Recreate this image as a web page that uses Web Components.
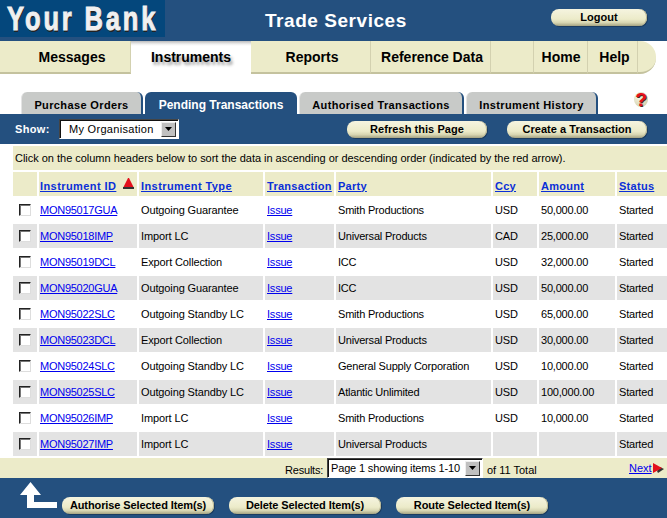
<!DOCTYPE html>
<html>
<head>
<meta charset="utf-8">
<title>Trade Services</title>
<style>
  html, body { margin: 0; padding: 0; background: #fff; }
  body { width: 667px; height: 518px; overflow: hidden; font-family: "Liberation Sans", Arial, sans-serif; font-size: 11px; color: #000; }
</style>
</head>
<body>
<bank-header></bank-header>
<main-nav></main-nav>
<sub-tabs></sub-tabs>
<tool-bar></tool-bar>
<data-table></data-table>
<results-bar></results-bar>
<action-bar></action-bar>

<script>
// Rounded beige button used all over the page
class PillButton extends HTMLElement {
    constructor() {
        super();
        this.attachShadow({ mode: 'open' });
        this.shadowRoot.innerHTML = `
            <style>
                :host {
                    display: flex;
                    align-items: center;
                    justify-content: center;
                    box-sizing: border-box;
                    height: 17px;
                    border-radius: 8px;
                    background: linear-gradient(#f5f4e0, #ecebc9 60%, #d8d6b2 80%, #a5a382);
                    box-shadow: inset -1px 0 0 #b9b793, 1px 1px 0 #1c3c60;
                    font: bold 11px "Liberation Sans", Arial, sans-serif;
                    letter-spacing: .05px;
                    color: #000;
                    white-space: nowrap;
                    padding-bottom: 1px;
                }
            </style>
            <slot></slot>
        `;
    }
}
customElements.define('pill-button', PillButton);

// Logo and page title
class BankHeader extends HTMLElement {
    constructor() {
        super();
        this.attachShadow({ mode: 'open' });
        this.shadowRoot.innerHTML = `
            <style>
                :host { display: flex; height: 41px; background: #24507f; align-items: flex-start; }
                .logo {
                    width: 165px;
                    height: 37px;
                    flex: none;
                    background: #04477c;
                    padding-left: 7px;
                    box-sizing: border-box;
                }
                .logo span {
                    display: block;
                    width: max-content;
                    color: #f0f0f0;
                    font: bold 34px/36px "Liberation Sans", Arial, sans-serif;
                    letter-spacing: 3.800px;
                    -webkit-text-stroke: 1px #f0f0f0;
                    text-shadow: 1px 2px 0 #222;
                    white-space: nowrap;
                    /* the logo face is much narrower than any installed font */
                    transform: scaleX(.75);
                    transform-origin: left top;
                }
                .title {
                    margin-left: 100px;
                    margin-top: 10px;
                    color: #fff;
                    font: bold 19px/22px "Liberation Sans", Arial, sans-serif;
                    letter-spacing: .55px;
                    width: 286px;
                }
                pill-button { width: 96px; margin-top: 9px; }
            </style>
            <div class="logo"><span>Your Bank</span></div>
            <div class="title">Trade Services</div>
            <pill-button>Logout</pill-button>
        `;
    }
}
customElements.define('bank-header', BankHeader);

// Main navigation strip
class MainNav extends HTMLElement {
    constructor() {
        super();
        this.attachShadow({ mode: 'open' });
        // label, width, left padding that nudges the label, class
        const items = [['Messages', 131, 14], ['Instruments', 120, 0, 'on'], ['Reports', 120, 3], ['Reference Data', 120, 3], ['', 43, 0], ['Home', 54, 1], ['Help', 50, 4]];
        this.shadowRoot.innerHTML = `
            <style>
                :host { display: flex; width: 656px; height: 33px; font: bold 14px "Liberation Sans", Arial, sans-serif; }
                div {
                    box-sizing: border-box;
                    display: flex;
                    align-items: center;
                    justify-content: center;
                    background: #ecebc9;
                    border-bottom: 2px solid #c4c29e;
                    border-right: 1px solid #d3d1b0;
                }
                .on {
                    background: linear-gradient(#bbb, #eee 3px, #fff 5px);
                    border: 0;
                    text-shadow: 2px 3px 3px #999;
                    padding-bottom: 1px;
                }
                .end { flex: 1; border-right: 0; border-radius: 0 16px 16px 0; }
            </style>
            ${items.map(i => `<div class="${i[3] || ''}" style="width:${i[1]}px;padding-left:${i[2]}px">${i[0]}</div>`).join('')}
            <div class="end"></div>
        `;
    }
}
customElements.define('main-nav', MainNav);

// Second level tabs
class SubTabs extends HTMLElement {
    constructor() {
        super();
        this.attachShadow({ mode: 'open' });
        const tabs = [['Purchase Orders', 122], ['Pending Transactions', 152, 'on'], ['Authorised Transactions', 165], ['Instrument History', 132]];
        this.shadowRoot.innerHTML = `
            <style>
                :host { display: flex; gap: 2px; height: 22px; padding: 18px 0 0 21px; position: relative; font: bold 11px "Liberation Sans", Arial, sans-serif; letter-spacing: .37px; }
                div {
                    box-sizing: border-box;
                    display: flex;
                    align-items: center;
                    justify-content: center;
                    background: #c8cac8;
                    border-radius: 6px 6px 0 0;
                    border-left: 1px solid #e4e4e4;
                    border-right: 2px solid #24507f;
                    padding-top: 4px;
                }
                .on { background: #24507f; color: #fff; border: 0; font-size: 12px; letter-spacing: 0; padding-top: 3px; }
                /* help icon sits in the empty corner of the strip */
                span {
                    position: absolute;
                    left: 634px;
                    top: 18px;
                    width: 14px;
                    height: 15px;
                    border-radius: 50%;
                    background: radial-gradient(circle at 35% 35%, #f6f5e2, #c9c7a2);
                    color: #e8101a;
                    font: bold 19px/15px "Liberation Sans", Arial, sans-serif;
                    letter-spacing: 0;
                    text-align: center;
                    text-shadow: 1px 1px 0 #4a2a20;
                }
            </style>
            ${tabs.map(t => `<div class="${t[2] || ''}" style="width:${t[1]}px">${t[0]}</div>`).join('')}
            <span>?</span>
        `;
    }
}
customElements.define('sub-tabs', SubTabs);

// Old style select box with a bevelled arrow button
class DropList extends HTMLElement {
    constructor() {
        super();
        this.attachShadow({ mode: 'open' });
        this.shadowRoot.innerHTML = `
            <style>
                :host {
                    display: flex;
                    box-sizing: border-box;
                    align-items: center;
                    background: #fff;
                    border: 1px solid #fff;
                    border-top-color: #444;
                    border-left-color: #444;
                    box-shadow: inset 1px 1px 0 #111;
                    font: 11px "Liberation Sans", Arial, sans-serif;
                    letter-spacing: .3px;
                    color: #000;
                    white-space: nowrap;
                }
                .txt { flex: 1; padding-left: var(--text-pad, 9px); }
                .btn {
                    width: 15px;
                    height: 15px;
                    margin-right: 2px;
                    box-sizing: border-box;
                    background: #c0c0c0;
                    border: 1px solid;
                    border-color: #eee #333 #333 #eee;
                    display: flex;
                    align-items: center;
                    justify-content: center;
                }
                svg { display: block; }
            </style>
            <div class="txt"><slot></slot></div>
            <div class="btn"><svg width="7" height="4" viewBox="0 0 7 4"><path d="M0 0h7L3.500 4z"/></svg></div>
        `;
    }
}
customElements.define('drop-list', DropList);

// Organisation filter and page actions
class ToolBar extends HTMLElement {
    constructor() {
        super();
        this.attachShadow({ mode: 'open' });
        this.shadowRoot.innerHTML = `
            <style>
                :host { display: flex; align-items: center; height: 30px; background: #24507f; margin-bottom: 2px; font: 11px "Liberation Sans", Arial, sans-serif; }
                b { color: #fff; margin-left: 15px; width: 44px; letter-spacing: .35px; }
                drop-list { width: 120px; height: 20px; margin-right: 168px; }
                pill-button { width: 140px; }
                pill-button + pill-button { margin-left: 20px; }
            </style>
            <b>Show:</b>
            <drop-list>My Organisation</drop-list>
            <pill-button>Refresh this Page</pill-button>
            <pill-button>Create a Transaction</pill-button>
        `;
    }
}
customElements.define('tool-bar', ToolBar);

// Sortable result table
class DataTable extends HTMLElement {
    constructor() {
        super();
        this.attachShadow({ mode: 'open' });
        const rows = [
            ['MON95017GUA', 'Outgoing Guarantee', 'Smith Productions', 'USD', '50,000.00'],
            ['MON95018IMP', 'Import LC', 'Universal Products', 'CAD', '25,000.00'],
            ['MON95019DCL', 'Export Collection', 'ICC', 'USD', '32,000.00'],
            ['MON95020GUA', 'Outgoing Guarantee', 'ICC', 'USD', '50,000.00'],
            ['MON95022SLC', 'Outgoing Standby LC', 'Smith Productions', 'USD', '65,000.00'],
            ['MON95023DCL', 'Export Collection', 'Universal Products', 'USD', '30,000.00'],
            ['MON95024SLC', 'Outgoing Standby LC', 'General Supply Corporation', 'USD', '10,000.00'],
            ['MON95025SLC', 'Outgoing Standby LC', 'Atlantic Unlimited', 'USD', '100,000.00'],
            ['MON95026IMP', 'Import LC', 'Smith Productions', 'USD', '10,000.00'],
            ['MON95027IMP', 'Import LC', 'Universal Products', '', '']
        ];
        const heads = ['Transaction', 'Party', 'Ccy', 'Amount', 'Status'];
        const body = rows.map((r, n) => {
            const c = n % 2 ? 'g' : '';
            return `
                <div class="${c} box"><i></i></div>
                <div class="${c} id"><a>${r[0]}</a></div>
                <div class="${c} ty">${r[1]}</div>
                <div class="${c}"><a>Issue</a></div>
                <div class="${c}">${r[2]}</div>
                <div class="${c}">${r[3]}</div>
                <div class="${c}">${r[4]}</div>
                <div class="${c}">Started</div>`;
        }).join('');
        this.shadowRoot.innerHTML = `
            <style>
                :host { display: block; margin-left: 13px; font: 11px "Liberation Sans", Arial, sans-serif; }
                .note { height: 24px; background: #ecebc9; display: flex; align-items: center; padding-left: 2px; margin-bottom: 2px; letter-spacing: -.02px; }
                .grid {
                    display: grid;
                    grid-template-columns: 24px 98px 124px 69px 155px 44px 76px 50px;
                    grid-auto-rows: 24px;
                    gap: 2px;
                }
                .grid > div { display: flex; align-items: center; padding-left: 2px; white-space: nowrap; overflow: hidden; letter-spacing: -.2px; }
                .grid > .ty { letter-spacing: -.12px; }
                .grid > .id { padding-left: 1px; letter-spacing: -.26px; }
                .grid > .h { background: #ecebc9; font-weight: bold; padding-top: 3px; box-sizing: border-box; letter-spacing: .28px; }
                .grid > .g { background: #e3e3e3; }
                .grid > .hid { padding-left: 1px; letter-spacing: .42px; }
                .grid > .hty { letter-spacing: .42px; }
                a { color: #0000ee; text-decoration: underline; }
                .h a { color: #0a2fd8; }
                .grid > .box { justify-content: center; padding-left: 0; }
                i {
                    display: block;
                    width: 12px;
                    height: 12px;
                    box-sizing: border-box;
                    background: #fff;
                    border: 1px solid;
                    border-color: #222 #ddd #ddd #222;
                    box-shadow: inset 1px 1px 0 #777;
                }
                svg { margin: -4px 0 0 7px; flex: none; }
            </style>
            <div class="note">Click on the column headers below to sort the data in ascending or descending order (indicated by the red arrow).</div>
            <div class="grid">
                <div class="h"></div>
                <div class="h hid"><a>Instrument ID</a>
                    <svg width="11" height="11" viewBox="0 0 11 11"><path d="M5 0h1l5 10H0z" fill="#e3101c"/><path d="M0 9h11v2H0z" fill="#333"/></svg>
                </div>
                <div class="h hty"><a>Instrument Type</a></div>
                ${heads.map(h => `<div class="h"><a>${h}</a></div>`).join('')}
                ${body}
            </div>
        `;
    }
}
customElements.define('data-table', DataTable);

// Paging line under the table
class ResultsBar extends HTMLElement {
    constructor() {
        super();
        this.attachShadow({ mode: 'open' });
        this.shadowRoot.innerHTML = `
            <style>
                :host { display: flex; align-items: center; height: 20px; margin-top: 2px; background: #ecebc9; font: 11px "Liberation Sans", Arial, sans-serif; }
                .lbl { margin-left: 285px; width: 42px; padding-top: 3px; letter-spacing: -.2px; }
                drop-list { width: 156px; height: 20px; --text-pad: 3px; letter-spacing: -.15px; }
                .of { margin-left: 4px; width: 142px; padding-top: 3px; }
                a { color: #0000ee; text-decoration: underline; }
                svg { margin-left: 1px; }
            </style>
            <span class="lbl">Results:</span>
            <drop-list>Page 1 showing items 1-10</drop-list>
            <span class="of">of 11 Total</span>
            <a>Next</a>
            <svg width="11" height="11" viewBox="0 0 11 11"><path d="M4 8l3-4 4 2-6 4z" fill="#333"/><path d="M0 0l9 5-9 5z" fill="#e3101c"/></svg>
        `;
    }
}
customElements.define('results-bar', ResultsBar);

// Bulk actions for the ticked rows
class ActionBar extends HTMLElement {
    constructor() {
        super();
        this.attachShadow({ mode: 'open' });
        this.shadowRoot.innerHTML = `
            <style>
                :host { display: flex; height: 40px; background: #24507f; }
                svg { margin: 4px 0 0 20px; flex: none; }
                .acts { display: flex; gap: 15px; margin: 19px 0 0 5px; }
                pill-button { width: 152px; height: 17px; letter-spacing: -.1px; }
            </style>
            <svg width="37" height="26" viewBox="0 0 37 26"><path d="M10.500 0L21 13h-7v7h23v6H7V13H0z" fill="#fff"/></svg>
            <div class="acts">
                <pill-button>Authorise Selected Item(s)</pill-button>
                <pill-button>Delete Selected Item(s)</pill-button>
                <pill-button>Route Selected Item(s)</pill-button>
            </div>
        `;
    }
}
customElements.define('action-bar', ActionBar);
</script>
</body>
</html>
